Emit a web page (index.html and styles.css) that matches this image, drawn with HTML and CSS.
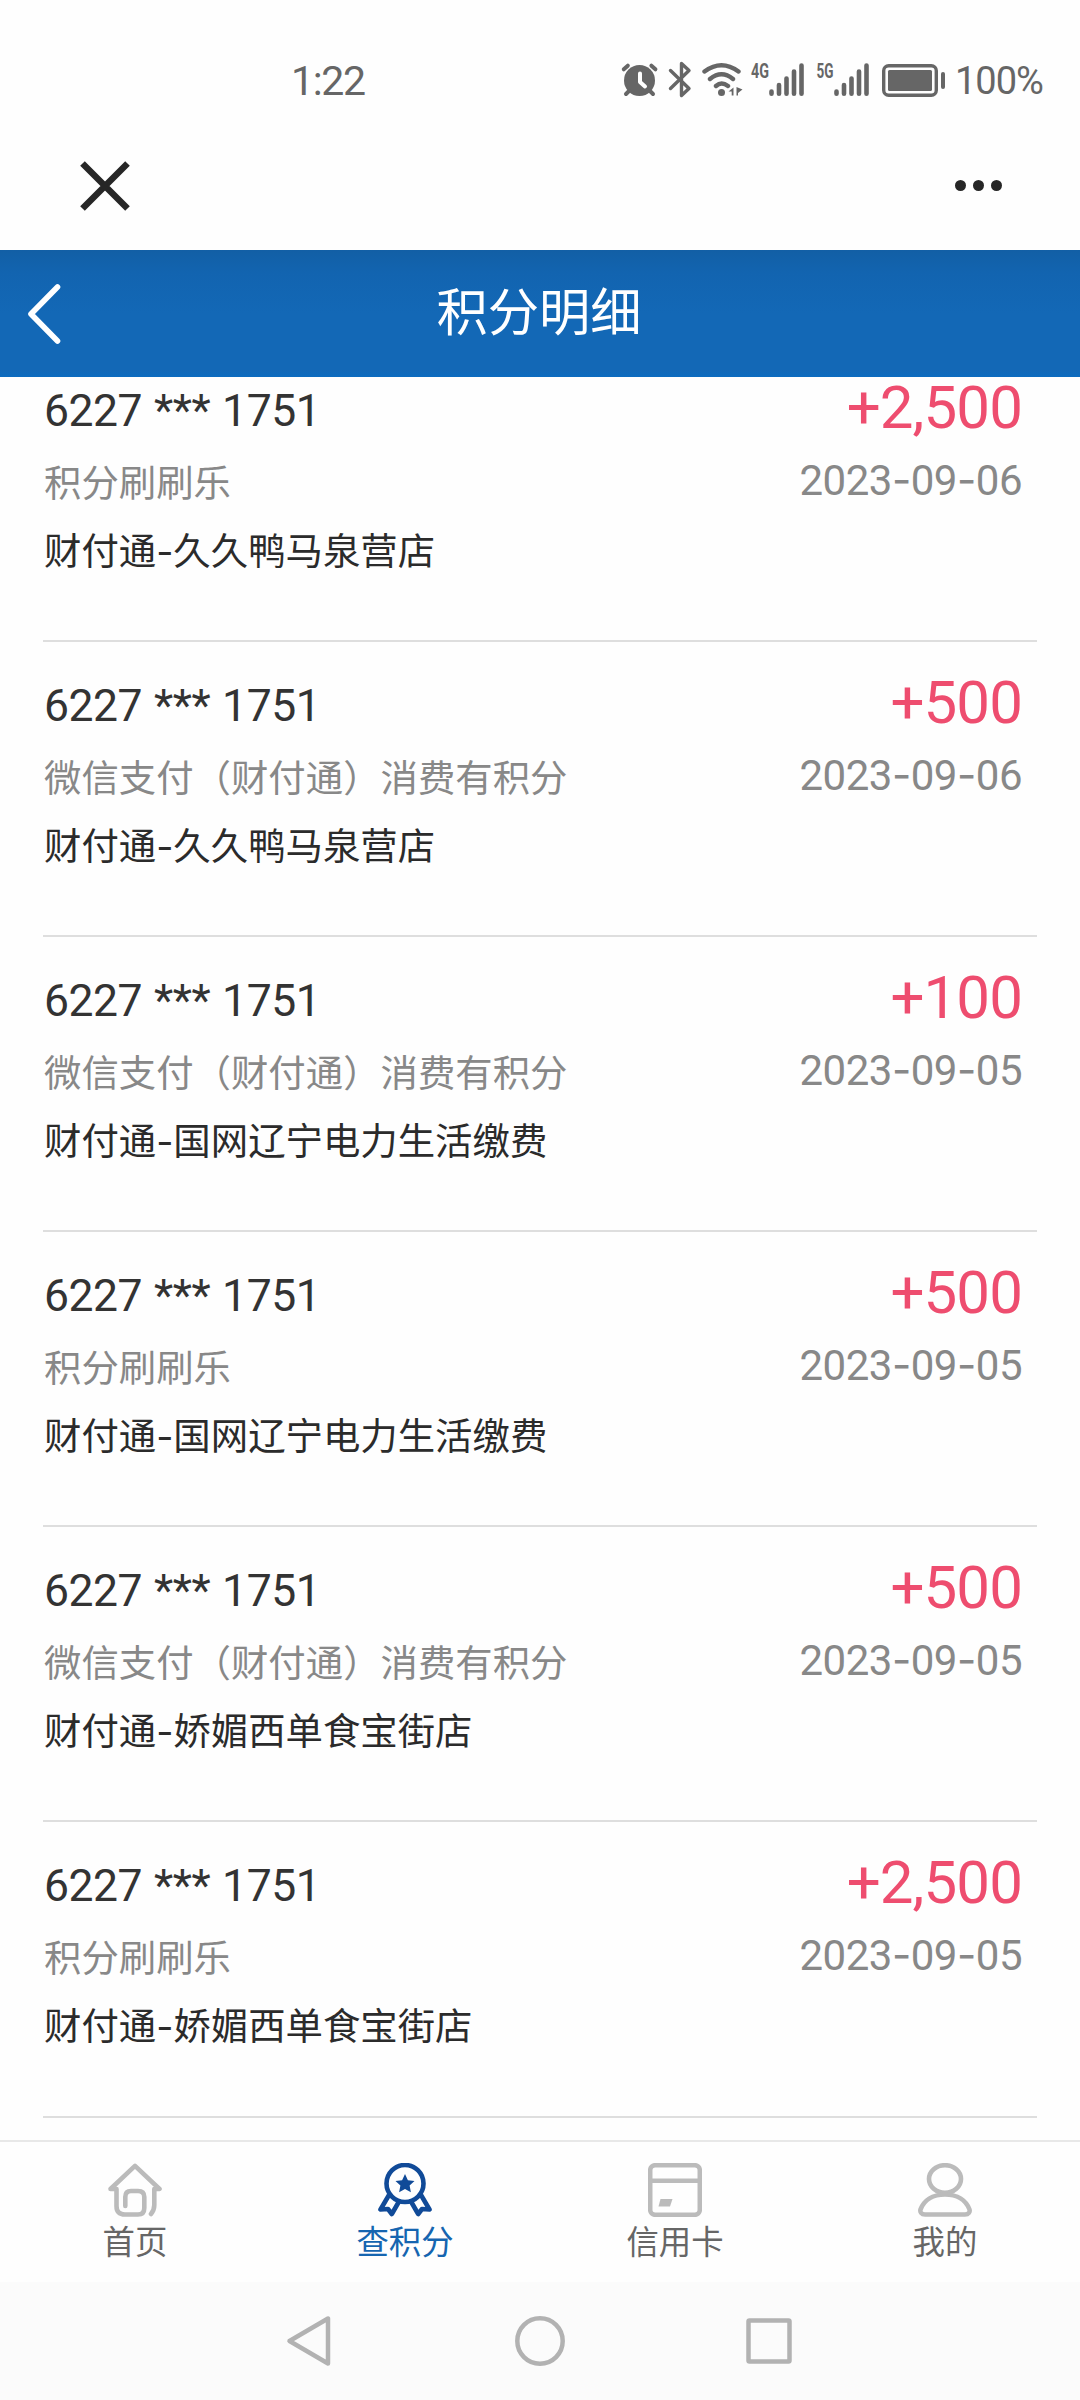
FILE: index.html
```html
<!DOCTYPE html>
<html lang="zh-CN">
<head>
    <meta charset="UTF-8">
    <meta name="viewport" content="width=device-width, initial-scale=1.0">
    <title>积分明细</title>
    <link rel="stylesheet" href="styles.css">
</head>
<body>
<div class="app">
    <div class="status-bar">
        <span class="time">1:22</span>
        <div class="status-icons">
            <svg width="326" height="40" viewBox="620 60 326 40">
                <!-- alarm -->
                <circle cx="639.5" cy="80.5" r="15.5" fill="#666"/>
                <path class="line" stroke-width="4" d="M623.8 69.3l4-3.6M651.4 65.7l4 3.6M626 94l3-3M650 91l3 3"/>
                <path d="M640 73.5v8.5l5 4.5" fill="none" stroke="#fff" stroke-width="4" stroke-linecap="round" stroke-linejoin="round"/>
                <!-- bluetooth -->
                <path class="line" stroke-width="3.4" d="M670.5 70.5L689 88.5L681.5 95.5V63.5L689 70.5L670.5 88.5"/>
                <!-- wifi -->
                <path class="line" stroke-width="4.4" d="M704.5 71.5Q721.5 59 738.5 71.5M710 79Q721.5 69.5 733 79M716 86Q721.5 81 728 86"/>
                <circle cx="721.5" cy="92.5" r="3.5" fill="#666"/>
                <path fill="#666" d="M733.5 87.5v8h-1.8v-4h-3.2zM736.500 87v8.500h1.500v-2.500l4.500-3.500z"/>
                <!-- signal -->
                <text class="net" x="751" y="78" textLength="18" lengthAdjust="spacingAndGlyphs">4G</text>
                <path class="line" stroke-width="4.6" d="M771.5 91.5v2.2M779 85v8.7M786.5 78.5v15.2M794 71.5v22.2M801.5 65.5v28.2"/>
                <text class="net" x="816.5" y="78" textLength="17" lengthAdjust="spacingAndGlyphs">5G</text>
                <path class="line" stroke-width="4.6" d="M836.5 91.5v2.2M844 85v8.7M851.5 78.5v15.2M859 71.5v22.2M866.5 65.5v28.2"/>
                <!-- battery -->
                <rect x="883.7" y="65.7" width="52.6" height="29.6" rx="5" fill="none" stroke="#666" stroke-width="3.4"/>
                <rect x="888" y="70" width="44" height="21" rx="1.5" fill="#666"/>
                <rect x="941" y="72" width="4" height="17" rx="2" fill="#666"/>
            </svg>
            <span class="battery">100%</span>
        </div>
    </div>

    <div class="mini-bar">
        <svg width="50" height="50" viewBox="0 0 50 50">
            <path d="M2.500 2.500L47.500 47.500M47.500 2.500L2.500 47.500" stroke="#262626" stroke-width="6.5"/>
        </svg>
        <div class="more"><i></i><i></i><i></i></div>
    </div>

    <div class="header">
        <svg class="back" width="34" height="60" viewBox="0 0 34 60">
            <path d="M30.5 3L4 30L30.5 57" fill="none" stroke="#fff" stroke-width="5.6" stroke-linecap="round" stroke-linejoin="round"/>
        </svg>
        <h1>积分明细</h1>
    </div>

    <div class="list">
        <div class="item">
            <div class="left">
                <p class="card">6227 <b>***</b> 1751</p>
                <p class="type">积分刷刷乐</p>
                <p class="shop">财付通-久久鸭马泉营店</p>
            </div>
            <div class="right">
                <p class="points">+2,500</p>
                <p class="date">2023<i>-</i>09<i>-</i>06</p>
            </div>
        </div>
        <div class="item">
            <div class="left">
                <p class="card">6227 <b>***</b> 1751</p>
                <p class="type">微信支付（财付通）消费有积分</p>
                <p class="shop">财付通-久久鸭马泉营店</p>
            </div>
            <div class="right">
                <p class="points">+500</p>
                <p class="date">2023<i>-</i>09<i>-</i>06</p>
            </div>
        </div>
        <div class="item">
            <div class="left">
                <p class="card">6227 <b>***</b> 1751</p>
                <p class="type">微信支付（财付通）消费有积分</p>
                <p class="shop">财付通-国网辽宁电力生活缴费</p>
            </div>
            <div class="right">
                <p class="points">+100</p>
                <p class="date">2023<i>-</i>09<i>-</i>05</p>
            </div>
        </div>
        <div class="item">
            <div class="left">
                <p class="card">6227 <b>***</b> 1751</p>
                <p class="type">积分刷刷乐</p>
                <p class="shop">财付通-国网辽宁电力生活缴费</p>
            </div>
            <div class="right">
                <p class="points">+500</p>
                <p class="date">2023<i>-</i>09<i>-</i>05</p>
            </div>
        </div>
        <div class="item">
            <div class="left">
                <p class="card">6227 <b>***</b> 1751</p>
                <p class="type">微信支付（财付通）消费有积分</p>
                <p class="shop">财付通-娇媚西单食宝街店</p>
            </div>
            <div class="right">
                <p class="points">+500</p>
                <p class="date">2023<i>-</i>09<i>-</i>05</p>
            </div>
        </div>
        <div class="item">
            <div class="left">
                <p class="card">6227 <b>***</b> 1751</p>
                <p class="type">积分刷刷乐</p>
                <p class="shop">财付通-娇媚西单食宝街店</p>
            </div>
            <div class="right">
                <p class="points">+2,500</p>
                <p class="date">2023<i>-</i>09<i>-</i>05</p>
            </div>
        </div>
    </div>

    <div class="tab-bar">
        <div class="tab">
            <svg width="54" height="54" viewBox="0 0 54 54">
                <path d="M8.5 26H2.5L27 2.8L51.5 26H46.3V42Q46.3 47 43 51M8.5 26V43Q8.5 51.5 17 51.5H30Q36.3 51.5 36.3 45V34Q36.3 28 30 28H23Q17.3 28 17.3 34V43"/>
            </svg>
            <span>首页</span>
        </div>
        <div class="tab active">
            <svg width="54" height="54" viewBox="0 0 54 54">
                <circle cx="27" cy="20.5" r="18.5"/>
                <path d="M11 32L2.5 46.5L10 46L13.8 51L21 38.5M43 32L51.5 46.5L44 46L40.2 51L33 38.5"/>
                <path class="star" d="M27 11l2.9 6.2 6.6.8-4.9 4.6 1.3 6.6-5.9-3.3-5.9 3.3 1.3-6.6-4.9-4.6 6.6-.8z"/>
            </svg>
            <span>查积分</span>
        </div>
        <div class="tab">
            <svg width="54" height="54" viewBox="0 0 54 54">
                <rect x="2.2" y="2.2" width="49.6" height="49.6" rx="5"/>
                <path d="M2 17.8H52"/>
                <path class="chip" d="M12.5 36H24.5L22 43.5H10.5z"/>
            </svg>
            <span>信用卡</span>
        </div>
        <div class="tab">
            <svg width="54" height="54" viewBox="0 0 54 54">
                <ellipse cx="27" cy="16" rx="16" ry="13.8"/>
                <path d="M27 31.5C14 31.5 6 38 2.7 46C1.5 49 3.5 51.5 7 51.5H47C50.5 51.5 52.5 49 51.3 46C48 38 40 31.5 27 31.5z"/>
            </svg>
            <span>我的</span>
        </div>
    </div>

    <div class="nav-bar">
        <svg width="50" height="54" viewBox="0 0 50 54"><path d="M43 4.500V49.500L4.500 27z"/></svg>
        <svg width="50" height="54" viewBox="0 0 50 54"><circle cx="25" cy="27" r="22.7"/></svg>
        <svg width="50" height="54" viewBox="0 0 50 54"><rect x="4.5" y="6.5" width="41" height="41" rx="1"/></svg>
    </div>
</div>
</body>
</html>
```

FILE: styles.css
```css
* {
    box-sizing: border-box;
    margin: 0;
    padding: 0;
}

body {
    font-family: Roboto, "Noto Sans CJK SC", sans-serif;
    background-color: #fefefe;
    color: #333;
}

.app {
    display: flex;
    flex-direction: column;
    width: 1080px;
    height: 2400px;
    overflow: hidden;
}

/* system status bar */
.status-bar {
    display: flex;
    justify-content: space-between;
    height: 120px;
    padding: 60px 36px 0 291px;
    color: #666;
}

.time {
    font-size: 41px;
    line-height: 43px;
    letter-spacing: -1.3px;
}

.status-icons {
    display: flex;
    gap: 9px;
}

.status-icons .line {
    fill: none;
    stroke: #666;
    stroke-linecap: round;
    stroke-linejoin: round;
}

.net {
    font-size: 21px;
    font-weight: bold;
    fill: #666;
}

.battery {
    width: 89px;
    font-size: 38px;
    line-height: 43px;
    letter-spacing: -1px;
}

/* close / more */
.mini-bar {
    display: flex;
    justify-content: space-between;
    align-items: center;
    height: 130px;
    padding: 1px 78px 0 80px;
}

.more {
    display: flex;
    gap: 7px;
}

.more i {
    width: 11px;
    height: 11px;
    border-radius: 50%;
    background-color: #262626;
}

.header {
    display: flex;
    align-items: center;
    height: 127px;
    padding: 0 28px 0 27px;
    background: linear-gradient(#125fa5, #1264b0 18%, #1368b6 50%, #1368b6 94%, #0b6cc0);
    color: #fff;
}

.header h1 {
    flex: 1;
    margin-right: 35px;
    font-size: 51.3px;
    font-weight: normal;
    line-height: 70px;
    text-align: center;
}

/* points list */
.list {
    flex: 1;
    overflow: hidden;
    padding: 0 43px;
}

.item {
    display: flex;
    justify-content: space-between;
    height: 295.1px;
    padding: 28px 15px 0 1px;
    border-bottom: 2px solid #dedede;
}

.item:first-child {
    margin-top: -30px;
}

.card {
    font-size: 44.5px;
    line-height: 72px;
    letter-spacing: -0.5px;
    word-spacing: 1.5px;
}

.card b {
    font-weight: normal;
}

.type,
.shop {
    font-family: Inter, "Noto Sans CJK SC", sans-serif;
    font-size: 37.4px;
}

.type {
    line-height: 74px;
    color: #888;
}

.shop {
    line-height: 61px;
    color: #2b2b2b;
}

.right {
    text-align: right;
    padding-top: 3px;
}

.points {
    font-size: 60px;
    line-height: 60px;
    letter-spacing: -0.9px;
    color: #ee4d6f;
}

.date {
    margin-top: 9px;
    font-size: 42px;
    line-height: 66px;
    letter-spacing: -0.5px;
    color: #888;
}

.date i {
    font-family: Inter, sans-serif;
    font-style: normal;
}

/* bottom tabs */
.tab-bar {
    display: flex;
    height: 142px;
    border-top: 2px solid #e8e8e8;
}

.tab {
    flex: 1;
    display: flex;
    flex-direction: column;
    align-items: center;
    padding-top: 21px;
    font-size: 32.4px;
    line-height: 52px;
    color: #666;
}

.tab svg {
    fill: none;
    stroke: #bbb;
    stroke-width: 4.6;
    stroke-linejoin: round;
    stroke-linecap: round;
}

.tab .chip {
    fill: #bbb;
    stroke: none;
}

.tab.active {
    color: #1565b0;
}

.tab.active svg {
    stroke: #104a98;
}

.tab .star {
    fill: #104a98;
    stroke: none;
}

/* android navigation */
.nav-bar {
    display: flex;
    justify-content: space-between;
    align-items: center;
    height: 118px;
    padding: 0 286px 0 285px;
    background-color: #fbfbfb;
}

.nav-bar svg {
    fill: none;
    stroke: #b2b2b2;
    stroke-width: 4.5;
    stroke-linejoin: round;
}
```
